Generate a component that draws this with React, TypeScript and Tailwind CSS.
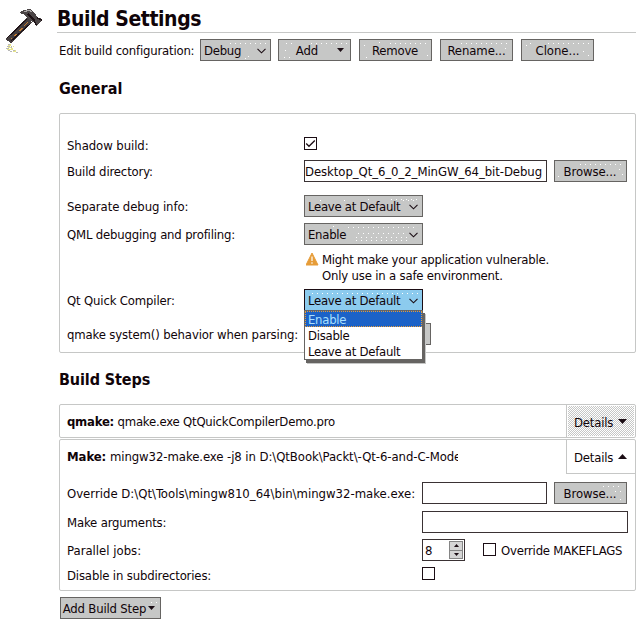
import type { ReactNode } from "react";

type Dots = [number, number, number][];

function Speckle({ dots }: { dots: Dots }) {
  return (
    <svg className="pointer-events-none absolute -left-px -top-px h-[22px] w-full overflow-visible" shapeRendering="crispEdges">
      {dots.map(([x, y, n]) =>
        Array.from({ length: n }, (_, i) => <rect key={`${x}-${y}-${i}`} x={x + i * 5} y={y} width="1" height="1" fill="#fff" />)
      )}
    </svg>
  );
}

function Button({ children, className = "", dots = [] }: { children: ReactNode; className?: string; dots?: Dots }) {
  return (
    <button className={`relative flex h-[22px] shrink-0 items-center justify-center whitespace-pre border border-[#666462] bg-[#c6c7c6] pt-[2px] leading-5 ${className}`}>
      <Speckle dots={dots} />
      {children}
    </button>
  );
}

function Chevron() {
  return (
    <svg width="9" height="6" viewBox="0 0 9 6" className="mt-px shrink-0" fill="none" stroke="#1b0d14" strokeWidth="1.1">
      <path d="M.5 .8 4.5 4.8 8.5 .8" />
    </svg>
  );
}

function Arrow({ up = false, className = "" }: { up?: boolean; className?: string }) {
  return (
    <svg viewBox="0 0 9 5" className={`shrink-0 ${className}`} fill="#1b0d14">
      <path d={up ? "M0 5H9L4.5 0z" : "M0 0H9L4.5 5z"} />
    </svg>
  );
}

function Combo({ label, className = "", dots = [] }: { label: string; className?: string; dots?: Dots }) {
  return (
    <div className={`relative flex h-[22px] shrink-0 items-center justify-between whitespace-pre border pl-[3px] pr-1 leading-5 ${className}`}>
      <Speckle dots={dots} />
      <span className="pt-[2px] tracking-[-0.27px]">{label}</span>
      <Chevron />
    </div>
  );
}

function Check({ checked = false }: { checked?: boolean }) {
  return (
    <span className="block h-[13px] w-[13px] shrink-0 border border-[#1b0d14] bg-white">
      {checked && (
        <svg width="11" height="11" viewBox="0 0 11 11" fill="none" stroke="#1b0d14" strokeWidth="1.3">
          <path d="M1.2 5.5 4 8.3 9.8 2.5" />
        </svg>
      )}
    </span>
  );
}

function Field({ children, className = "" }: { children?: ReactNode; className?: string }) {
  return <div className={`h-[22px] shrink-0 overflow-hidden whitespace-pre border border-[#3a3234] bg-white leading-[22px] ${className}`}>{children}</div>;
}

function Row({ label, labelClass = "tracking-[-0.16px] leading-6", children, className = "", wide = false }: { label?: string; labelClass?: string; children?: ReactNode; className?: string; wide?: boolean }) {
  return (
    <div className={`flex h-[22px] pl-[7px] ${className}`}>
      <span className={`shrink-0 whitespace-pre ${wide ? "w-[355px]" : "w-[237px]"} ${labelClass}`}>{label}</span>
      {children}
    </div>
  );
}

function Hammer() {
  return (
    <svg width="57" height="60" viewBox="0 0 57 60" className="shrink-0" shapeRendering="crispEdges">
      <path d="M27 18 32 23 11 43 5 39z" fill="#443d3e" />
      <path d="M27 19 7 38M30 24 11 41" stroke="#1d1115" strokeWidth="1.2" />
      <path d="M28 22 24 26M23 28 19 31M17 34 14 36M12 38 11 39" stroke="#c47b30" strokeWidth="1.3" />
      <path d="M19 13 24 10 30 9 35 13 37 17 42 19 41 22 36 26 34 22 30 21 26 16 23 14z" fill="#4b4546" />
      <path d="M24 12 29 10 32 12" stroke="#aaa6a6" fill="none" />
      <path d="M28 14 34 20 36 25M37 18 42 20" stroke="#1d1115" fill="none" strokeWidth="1.5" />
      <path d="M8 44h3v1H8zM7 46h3v1H7zM6 48h3v1H6zM11 46h1v2h-1zM13 50h2v1h-2zM16 52h2v1h-2zM10 51h2v1h-2zM8 50h2v1H8z" fill="#b8b8b8" />
      <path d="M10 44h1v2h-1zM8 47h3v1H8zM9 49h3v1H9zM12 48h1v2h-1zM13 51h2v1h-2zM15 50h1v2h-1zM13 46h1v1h-1zM8 45h2v1H8zM11 48h1v1h-1zM7 49h2v1H7z" fill="#e8e68a" />
    </svg>
  );
}

const grey = "border-[#666462] bg-[#c6c7c6]";

export default function App() {
  return (
    <div className="flex h-[624px] w-[644px] overflow-hidden bg-white font-['DejaVu_Sans_Condensed','DejaVu_Sans',sans-serif] [font-stretch:condensed] text-[13px] text-[#100409]">
      <Hammer />
      <main className="w-[579px] shrink-0">
        <h1 className="h-[33px] whitespace-pre border-b border-[#c6c7c6] pt-[3px] text-[21px] font-bold leading-[32px] tracking-[-0.43px]">Build Settings</h1>
        <div className="mt-[6px] flex h-[22px] pl-[2px]">
          <span className="w-[141px] shrink-0 whitespace-pre leading-6 tracking-[-0.2px]">Edit build configuration:</span>
          <Combo label="Debug" className={`w-[71px] ${grey}`} dots={[[30, 4, 8], [45, 19, 1], [48, 17, 1]]} />
          <Button className="ml-[7px] w-[73px] pl-[11px] tracking-[-0.1px]" dots={[[8, 4, 2], [33, 4, 8], [6, 18, 2], [7, 11, 1]]}>
            Add<Arrow className="mb-[2px] ml-[19px] h-1 w-[7px]" />
          </Button>
          <Button className="ml-[8px] w-[73px] pr-px tracking-[-0.2px]" dots={[[20, 3, 1], [31, 4, 8], [5, 6, 1], [7, 18, 1], [68, 16, 1]]}>Remove</Button>
          <Button className="ml-[8px] w-[73px] tracking-[-0.1px]" dots={[[21, 4, 10], [65, 9, 1]]}>Rename...</Button>
          <Button className="ml-[8px] w-[73px] tracking-[-0.05px]" dots={[[9, 4, 1], [27, 4, 9], [5, 6, 1], [62, 12, 1], [67, 16, 1]]}>Clone...</Button>
        </div>
        <div className="pl-[2px]">
          <h2 className="mt-[16px] h-[36px] whitespace-pre text-[16px] font-bold leading-6">General</h2>
          <section className="h-[240px] rounded-[2px] border border-[#c6c7c6] pt-[21px]">
            <Row label="Shadow build:" labelClass="leading-[22px] tracking-[-0.08px]">
              <div className="pt-[2px]"><Check checked /></div>
            </Row>
            <Row label="Build directory:" className="mt-[3px]">
              <Field className="w-[243px] tracking-[-0.07px]">Desktop_Qt_6_0_2_MinGW_64_bit-Debug</Field>
              <Button className="ml-[7px] w-[73px] pr-px tracking-[-0.1px]" dots={[[26, 4, 9], [4, 16, 1], [65, 9, 1], [68, 14, 1]]}>Browse...</Button>
            </Row>
            <Row label="Separate debug info:" labelClass="leading-6 tracking-[-0.09px]" className="mt-[13px]">
              <Combo label="Leave at Default" className={`w-[119px] ${grey}`} dots={[[16, 5, 1], [40, 5, 1], [64, 4, 1], [87, 4, 6], [99, 5, 3]]} />
            </Row>
            <Row label="QML debugging and profiling:" labelClass="leading-6 tracking-[-0.18px]" className="mt-[6px]">
              <Combo label="Enable" className={`w-[119px] ${grey}`} dots={[[29, 3, 1], [44, 4, 14], [54, 10, 10], [52, 14, 11], [52, 17, 11]]} />
            </Row>
            <div className="mt-[6px] flex h-[32px] pl-[246px]">
              <svg width="16" height="13" viewBox="0 0 16 13" className="mt-[2px] shrink-0">
                <path d="M6 0 12 12H0z" fill="#e69c38" stroke="#e69c38" strokeLinejoin="round" />
                <path d="M5.4 3.5H6.6V8H5.4zM5.4 9.3H6.6V10.7H5.4z" fill="#fff" />
              </svg>
              <p className="whitespace-pre pt-px leading-4 tracking-[-0.24px]">
                Might make your application vulnerable.<br />
                <span className="tracking-[-0.19px]">Only use in a safe environment.</span>
              </p>
            </div>
            <Row label="Qt Quick Compiler:" className="mt-[6px]">
              <div className="relative z-10 h-[22px]">
                <Combo label="Leave at Default" className="w-[119px] border-[#1b0d14] bg-[#8ccbee]" dots={[[8, 4, 22]]} />
                <ul className="absolute left-0 top-[21px] h-[50px] w-[119px] whitespace-pre border border-[#666462] bg-white leading-[18px] tracking-[-0.27px] shadow-[2px_3px_0_#666462,3px_4px_0_#c6c7c6]">
                  <li className="h-4 border border-dotted border-[#e69c38] bg-[#1b62c7] pl-[2px] leading-4 text-[#a9e0ff]">Enable</li>
                  <li className="h-4 pl-[3px]">Disable</li>
                  <li className="h-4 pl-[3px]">Leave at Default</li>
                </ul>
              </div>
            </Row>
            <Row label="qmake system() behavior when parsing:" labelClass="leading-6 tracking-[-0.14px]" className="mt-[12px]">
              <Combo label="" className={`w-[127px] ${grey}`} />
            </Row>
          </section>
          <h2 className="mt-[15px] h-[36px] whitespace-pre text-[16px] font-bold leading-6 tracking-[-0.1px]">Build Steps</h2>
          <section className="flex h-[34px] rounded-[2px] border border-[#c6c7c6]">
            <p className="h-8 w-[507px] whitespace-pre border-r border-[#c6c7c6] pl-[7px] leading-[34px] tracking-[-0.21px]"><b className="tracking-[-0.25px]">qmake:</b> qmake.exe QtQuickCompilerDemo.pro</p>
            <div className="m-px flex flex-1 items-center bg-[conic-gradient(#c6c7c6_25%,#fff_0_50%,#c6c7c6_0_75%,#fff_0)] bg-[length:2px_2px] pl-[6px]">
              <span className="pt-[3px] tracking-[-0.2px]">Details</span><Arrow className="ml-[5px] h-[5px] w-[9px]" />
            </div>
          </section>
          <section className="mt-px h-[152px] rounded-[2px] border border-[#c6c7c6]">
            <div className="flex h-[34px]">
              <div className="w-[506px] pl-[7px] leading-[34px]">
                <p className="w-[391px] overflow-hidden whitespace-pre tracking-[-0.07px]"><b>Make:</b>{" mingw32-make.exe -j8 in D:\\QtBook\\Packt\\-Qt-6-and-C-Mode"}</p>
              </div>
              <div className="flex flex-1 items-center border-b border-l border-[#c6c7c6] pl-[7px]">
                <span className="pt-[3px] tracking-[-0.2px]">Details</span><Arrow up className="ml-[5px] h-[5px] w-[9px]" />
              </div>
            </div>
            <Row wide label={"Override D:\\Qt\\Tools\\mingw810_64\\bin\\mingw32-make.exe:"} labelClass="leading-6" className="mt-[8px]">
              <Field className="w-[125px]" />
              <Button className="ml-[7px] w-[73px] pr-px tracking-[-0.1px]" dots={[[49, 4, 4], [61, 9, 2], [66, 17, 1]]}>Browse...</Button>
            </Row>
            <Row wide label="Make arguments:" className="mt-[7px]">
              <Field className="w-[206px]" />
            </Row>
            <Row wide label="Parallel jobs:" labelClass="leading-6" className="mt-[6px]">
              <Field className="flex w-[43px] justify-between pl-[2px] pr-px">
                <span>8</span>
                <span className="my-px flex w-[14px] flex-col">
                  <span className="flex flex-1 items-center justify-center border border-[#858585] bg-[#d5d5d5]"><Arrow up className="h-[3px] w-[5px]" /></span>
                  <span className="flex flex-1 items-center justify-center border border-t-0 border-[#858585] bg-[#d5d5d5]"><Arrow className="h-[3px] w-[5px]" /></span>
                </span>
              </Field>
              <div className="ml-[18px] mt-[4px]"><Check /></div>
              <span className="ml-[5px] whitespace-pre leading-6 tracking-[-0.22px]">Override MAKEFLAGS</span>
            </Row>
            <Row wide label="Disable in subdirectories:" className="mt-[3px]">
              <div className="mt-[3px]"><Check /></div>
            </Row>
          </section>
          <Button className="ml-px mt-[6px] w-[101px] pr-[3px] tracking-[-0.18px]" dots={[[91, 5, 2]]}>
            Add Build Step<Arrow className="mb-[2px] ml-[2px] h-1 w-[7px]" />
          </Button>
        </div>
      </main>
    </div>
  );
}
